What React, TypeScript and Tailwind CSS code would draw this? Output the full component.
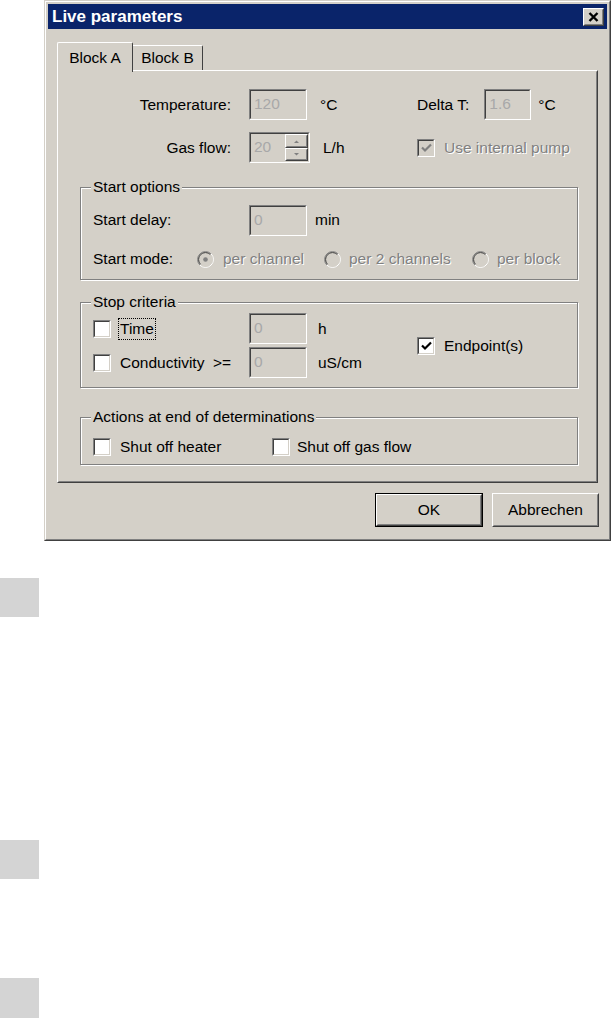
import React from "react";

const DIS = "text-[#808080] [text-shadow:1px_1px_0_#ffffff]";

function Sunken({ className = "", children }: { className?: string; children?: React.ReactNode }) {
  return (
    <div className={`border border-t-[#808080] border-l-[#808080] border-r-white border-b-white ${className}`}>
      <div className="h-full border border-t-[#404040] border-l-[#404040] border-r-[#d4d0c8] border-b-[#d4d0c8]">
        {children}
      </div>
    </div>
  );
}

function Raised({ className = "", inner = "", children }: { className?: string; inner?: string; children?: React.ReactNode }) {
  return (
    <div className={`border border-t-white border-l-white border-r-[#404040] border-b-[#404040] ${className}`}>
      <div className={`h-full border border-t-[#d4d0c8] border-l-[#d4d0c8] border-r-[#808080] border-b-[#808080] ${inner}`}>
        {children}
      </div>
    </div>
  );
}

function Field({ value, w }: { value: string; w: string }) {
  return (
    <Sunken className={`${w} h-[31px] shrink-0`}>
      <div className="h-full bg-[#d4d0c8] pl-[3px] pt-[4px] text-[#a8a8a8]">{value}</div>
    </Sunken>
  );
}

function Check({ checked = false, disabled = false }: { checked?: boolean; disabled?: boolean }) {
  return (
    <Sunken className="w-[18px] h-[18px] shrink-0">
      <div className={`h-full flex items-center justify-center ${disabled ? "bg-[#d4d0c8]" : "bg-white"}`}>
        {checked && (
          <svg width="11" height="10" viewBox="0 0 11 10">
            <path d="M1 4.5 L4 7.5 L10 1.5" fill="none" stroke={disabled ? "#808080" : "#000"} strokeWidth="2.2" />
          </svg>
        )}
      </div>
    </Sunken>
  );
}

function Radio({ selected = false }: { selected?: boolean }) {
  return (
    <svg width="17" height="17" viewBox="0 0 17 17" className="shrink-0">
      <circle cx="8.5" cy="8.5" r="7.5" fill="#d4d0c8" />
      <path d="M2.9 14.1 A7.5 7.5 0 0 1 14.1 2.9" fill="none" stroke="#808080" strokeWidth="1" />
      <path d="M14.1 2.9 A7.5 7.5 0 0 1 2.9 14.1" fill="none" stroke="#ffffff" strokeWidth="1" />
      <path d="M3.6 13.4 A6.5 6.5 0 0 1 13.4 3.6" fill="none" stroke="#404040" strokeWidth="1" />
      <path d="M13.4 3.6 A6.5 6.5 0 0 1 3.6 13.4" fill="none" stroke="#d4d0c8" strokeWidth="1" />
      {selected && <circle cx="8.5" cy="8.5" r="2.3" fill="#808080" />}
    </svg>
  );
}

function Group({ title, className = "", children }: { title: string; className?: string; children: React.ReactNode }) {
  return (
    <fieldset
      className={`ml-[21px] w-[498px] border border-[#808080] shadow-[inset_1px_1px_0_#ffffff,1px_1px_0_#ffffff] px-0 ${className}`}
    >
      <legend className="ml-[10px] px-[2px] bg-[#d4d0c8] leading-[18px]">{title}</legend>
      {children}
    </fieldset>
  );
}

function Spinner() {
  return (
    <Sunken className="w-[61px] h-[31px] shrink-0">
      <div className="h-full flex bg-[#d4d0c8]">
        <div className="flex-1 pl-[3px] pt-[4px] text-[#a8a8a8]">20</div>
        <div className="w-[23px] flex flex-col">
          <Raised className="h-[14px]" inner="flex items-center justify-center">
            <svg width="7" height="5" viewBox="0 0 7 5">
              <path d="M1 4 L6 4 L3.5 1.5 Z" fill="#808080" />
            </svg>
          </Raised>
          <Raised className="h-[13px]" inner="flex items-center justify-center">
            <svg width="7" height="5" viewBox="0 0 7 5">
              <path d="M1 1 L6 1 L3.5 3.5 Z" fill="#808080" />
            </svg>
          </Raised>
        </div>
      </div>
    </Sunken>
  );
}

export default function App() {
  return (
    <div className="min-h-screen bg-white font-['Liberation_Sans',Arial,sans-serif] text-[15.5px] leading-[18px] text-black">
      {/* dialog */}
      <div className="ml-[44px] w-[567px] h-[541px] border border-t-[#d4d0c8] border-l-[#d4d0c8] border-r-[#404040] border-b-[#404040]">
        <div className="h-full border border-t-white border-l-white border-r-[#808080] border-b-[#808080] bg-[#d4d0c8] p-[2px] flex flex-col">
          {/* title bar */}
          <div className="h-[25px] bg-[#0a246a] flex items-center justify-between pl-[4px] pr-[3px]">
            <span className="text-white font-bold text-[17px]">Live parameters</span>
            <Raised className="w-[21px] h-[18px] bg-[#d4d0c8]" inner="flex items-center justify-center">
              <svg width="11" height="10" viewBox="0 0 11 10">
                <path d="M1.5 1 L9.5 9 M9.5 1 L1.5 9" stroke="#000" strokeWidth="2.4" />
              </svg>
            </Raised>
          </div>

          {/* tabs */}
          <div className="mt-[13px] ml-[9px] h-[28px] flex items-end">
            <div className="relative z-10 w-[76px] h-[30px] -mb-[2px] bg-[#d4d0c8] border-t border-l border-r border-t-white border-l-white border-r-[#404040] rounded-t-[2px] flex items-start justify-center pt-[6px]">
              Block A
            </div>
            <div className="w-[70px] h-[25px] border-t border-r border-t-white border-r-[#404040] rounded-tr-[2px] flex items-start justify-center pt-[3px]">
              Block B
            </div>
          </div>

          {/* tab panel */}
          <div className="mx-[9px] h-[413px] border border-t-white border-l-white border-r-[#404040] border-b-[#404040]">
            <div className="h-full border border-t-[#d4d0c8] border-l-[#d4d0c8] border-r-[#808080] border-b-[#808080] pt-[17px]">
              {/* temperature row */}
              <div className="flex items-center h-[31px]">
                <div className="w-[172px] text-right">Temperature:</div>
                <div className="ml-[18px]">
                  <Field value="120" w="w-[58px]" />
                </div>
                <div className="ml-[13px] w-[97px]">°C</div>
                <div>Delta T:</div>
                <div className="ml-[15px]">
                  <Field value="1.6" w="w-[47px]" />
                </div>
                <div className="ml-[7px]">°C</div>
              </div>

              {/* gas flow row */}
              <div className="mt-[12px] flex items-center h-[31px]">
                <div className="w-[172px] text-right">Gas flow:</div>
                <div className="ml-[18px]">
                  <Spinner />
                </div>
                <div className="ml-[13px] w-[94px]">L/h</div>
                <Check checked disabled />
                <span className={`ml-[9px] ${DIS}`}>Use internal pump</span>
              </div>

              {/* start options */}
              <Group title="Start options" className="mt-[15px] pb-[10px]">
                <div className="mt-[8px] flex items-center h-[32px] pl-[12px]">
                  <div className="w-[156px]">Start delay:</div>
                  <Field value="0" w="w-[58px]" />
                  <div className="ml-[8px]">min</div>
                </div>
                <div className="mt-[13px] flex items-center h-[20px] pl-[12px]">
                  <div className="w-[104px]">Start mode:</div>
                  <div className="w-[127px] flex items-center">
                    <Radio selected />
                    <span className={`ml-[9px] ${DIS}`}>per channel</span>
                  </div>
                  <div className="w-[148px] flex items-center">
                    <Radio />
                    <span className={`ml-[8px] ${DIS}`}>per 2 channels</span>
                  </div>
                  <div className="flex items-center">
                    <Radio />
                    <span className={`ml-[8px] ${DIS}`}>per block</span>
                  </div>
                </div>
              </Group>

              {/* stop criteria */}
              <Group title="Stop criteria" className="mt-[13px] pb-[9px]">
                <div className="mt-[2px] flex items-center pl-[12px]">
                  <div className="flex flex-col gap-[3px]">
                    <div className="flex items-center h-[31px]">
                      <div className="w-[156px] flex items-center">
                        <Check />
                        <span className="ml-[7px] px-[1px] border border-dotted border-black leading-[20px]">Time</span>
                      </div>
                      <Field value="0" w="w-[58px]" />
                      <div className="ml-[11px] w-[99px]">h</div>
                    </div>
                    <div className="flex items-center h-[31px]">
                      <div className="w-[156px] flex items-center">
                        <Check />
                        <span className="ml-[9px] whitespace-pre">Conductivity  &gt;=</span>
                      </div>
                      <Field value="0" w="w-[58px]" />
                      <div className="ml-[11px] w-[99px]">uS/cm</div>
                    </div>
                  </div>
                  <div className="flex items-center">
                    <Check checked />
                    <span className="ml-[9px]">Endpoint(s)</span>
                  </div>
                </div>
              </Group>

              {/* actions */}
              <Group title="Actions at end of determinations" className="mt-[20px] pb-[8px]">
                <div className="mt-[12px] flex items-center h-[18px] pl-[12px]">
                  <div className="w-[179px] flex items-center">
                    <Check />
                    <span className="ml-[9px]">Shut off heater</span>
                  </div>
                  <Check />
                  <span className="ml-[7px]">Shut off gas flow</span>
                </div>
              </Group>
            </div>
          </div>

          {/* buttons */}
          <div className="mt-[10px] mr-[8px] flex justify-end gap-[9px]">
            <div className="w-[108px] h-[34px] border border-black">
              <Raised className="h-full" inner="flex items-center justify-center">
                OK
              </Raised>
            </div>
            <Raised className="w-[107px] h-[34px]" inner="flex items-center justify-center">
              Abbrechen
            </Raised>
          </div>
        </div>
      </div>

      {/* side markers */}
      <div className="mt-[37px] w-[39px] h-[39px] bg-[#d4d4d4]" />
      <div className="mt-[223px] w-[39px] h-[39px] bg-[#d4d4d4]" />
      <div className="mt-[99px] w-[39px] h-[40px] bg-[#d4d4d4]" />
    </div>
  );
}
